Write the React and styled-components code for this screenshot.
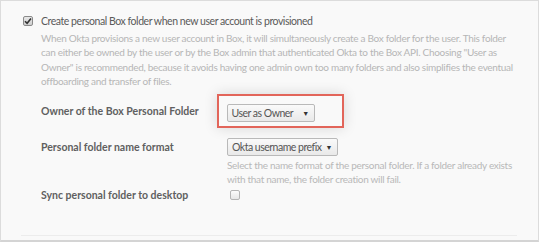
import React from 'react';
import styled, { createGlobalStyle } from 'styled-components';

const GlobalStyle = createGlobalStyle`
  html, body {
    margin: 0;
    padding: 0;
    background: #ffffff;
  }
  body {
    font-family: Lato, 'Open Sans', sans-serif;
  }
`;

const Panel = styled.div`
  box-sizing: border-box;
  width: 539px;
  height: 242px;
  border: 1px solid #dcdcdc;
  border-bottom: 2px solid #d4d4d4;
  background: #f9f9f9;
  padding: 12px 21px 4px 20px;
  display: flex;
  flex-direction: column;
`;

const Section = styled.div`
  flex: 1;
  padding-left: 2px;
  border-bottom: 1px solid #ececec;
`;

const CheckRow = styled.label`
  display: flex;
  align-items: center;
  gap: 8px;
  font-size: 10.5px;
  letter-spacing: -0.45px;
  color: #5a5a5a;
  height: 16px;
`;

const Box = styled.span`
  box-sizing: border-box;
  width: 10px;
  height: 10px;
  border: 1px solid ${({ checked }) => (checked ? '#8a8a8a' : '#b4b4b4')};
  border-radius: 2px;
  background: ${({ checked }) =>
    checked ? 'linear-gradient(#e8e8e8, #cfcfcf)' : 'linear-gradient(#fbfbfb, #e6e6e6)'};
  display: inline-flex;
  align-items: center;
  justify-content: center;
  flex-shrink: 0;
`;

const Description = styled.p`
  margin: 2px 0 0 18px;
  font-size: 10px;
  line-height: 14.3px;
  letter-spacing: -0.3px;
  color: #b6b6b6;
  max-width: 478px;
`;

const Form = styled.div`
  margin: 6px 0 0 18px;
  display: grid;
  grid-template-columns: 176px 1fr;
`;

const Label = styled.div`
  align-self: ${({ top }) => (top ? 'start' : 'center')};
  margin-top: ${({ gap }) => gap || 0}px;
  font-size: 10.5px;
  line-height: 18px;
  font-weight: 700;
  color: #606060;
`;

const Field = styled.div`
  display: flex;
  flex-direction: column;
  align-items: flex-start;
  margin-top: ${({ gap }) => gap || 0}px;
  padding-left: ${({ flush }) => (flush ? 0 : 10)}px;
`;

const Highlight = styled.div`
  padding: 4.5px 26.5px 4.5px 7.5px;
  border: 2.5px solid #e2655a;
  box-shadow: 0 0 14px rgba(0, 0, 0, 0.14);
`;

const Select = styled.div`
  box-sizing: border-box;
  display: inline-flex;
  align-items: center;
  gap: ${({ spread }) => (spread ? 9 : 4)}px;
  height: 18px;
  padding: 0 5px 0 4px;
  border: 1px solid #b9b9b9;
  border-radius: 2px;
  background: linear-gradient(#fafafa, #e9e9e9);
  font-size: 10.5px;
  letter-spacing: -0.5px;
  color: #555;
  white-space: nowrap;
`;

const Caret = styled.span`
  font-size: 7px;
  letter-spacing: 0;
  color: #333;
`;

const Help = styled.div`
  margin-top: 2px;
  font-size: 10px;
  line-height: 14px;
  letter-spacing: -0.3px;
  color: #b8b8b8;
  max-width: 296px;
`;

const CheckCell = styled.div`
  height: 18px;
  display: flex;
  align-items: center;
  padding-left: 3px;
`;

const Check = ({ checked }) => (
  <Box checked={checked}>
    {checked && (
      <svg width="8" height="8" viewBox="0 0 8 8">
        <path d="M1 4.2 L3.1 6.3 L7 1.5" fill="none" stroke="#333" strokeWidth="1.6" />
      </svg>
    )}
  </Box>
);

export default function App() {
  return (
    <>
      <GlobalStyle />
      <Panel>
        <Section>
          <CheckRow>
            <Check checked />
            Create personal Box folder when new user account is provisioned
          </CheckRow>
          <Description>
            When Okta provisions a new user account in Box, it will simultaneously create a Box folder for the user. This folder
            can either be owned by the user or by the Box admin that authenticated Okta to the Box API. Choosing "User as
            Owner" is recommended, because it avoids having one admin own too many folders and also simplifies the eventual
            offboarding and transfer of files.
          </Description>
          <Form>
            <Label>Owner of the Box Personal Folder</Label>
            <Field flush>
              <Highlight>
                <Select spread>
                  User as Owner <Caret>▼</Caret>
                </Select>
              </Highlight>
            </Field>
            <Label top gap={10}>Personal folder name format</Label>
            <Field gap={10}>
              <Select>
                Okta username prefix <Caret>▼</Caret>
              </Select>
              <Help>
                Select the name format of the personal folder. If a folder already exists with that name, the folder
                creation will fail.
              </Help>
            </Field>
            <Label>Sync personal folder to desktop</Label>
            <Field>
              <CheckCell>
                <Check />
              </CheckCell>
            </Field>
          </Form>
        </Section>
      </Panel>
    </>
  );
}
